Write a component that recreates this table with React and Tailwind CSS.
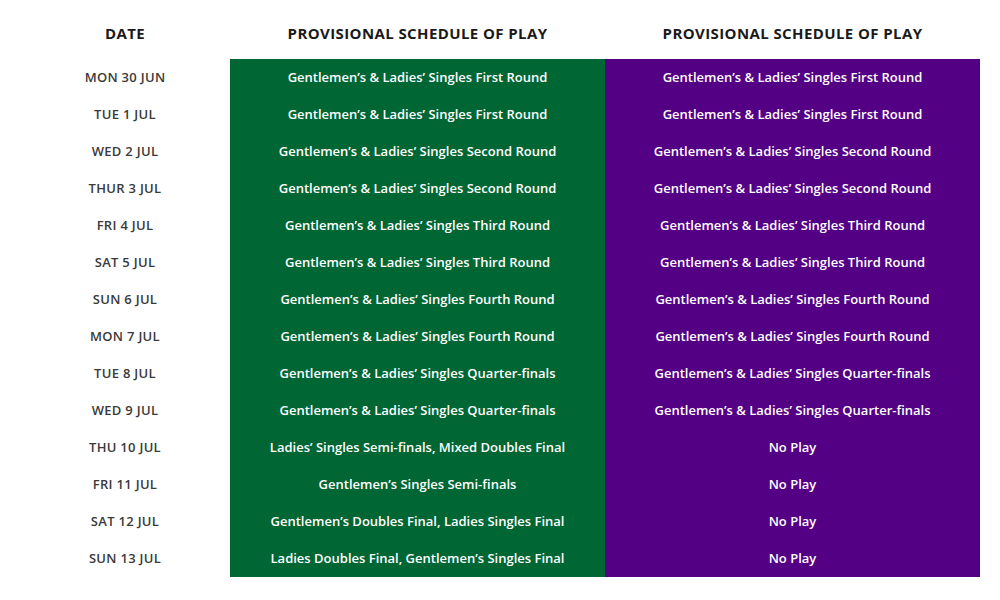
import React from "react";

const rows = [
  ["MON 30 JUN", "Gentlemen’s & Ladies’ Singles First Round", "Gentlemen’s & Ladies’ Singles First Round"],
  ["TUE 1 JUL", "Gentlemen’s & Ladies’ Singles First Round", "Gentlemen’s & Ladies’ Singles First Round"],
  ["WED 2 JUL", "Gentlemen’s & Ladies’ Singles Second Round", "Gentlemen’s & Ladies’ Singles Second Round"],
  ["THUR 3 JUL", "Gentlemen’s & Ladies’ Singles Second Round", "Gentlemen’s & Ladies’ Singles Second Round"],
  ["FRI 4 JUL", "Gentlemen’s & Ladies’ Singles Third Round", "Gentlemen’s & Ladies’ Singles Third Round"],
  ["SAT 5 JUL", "Gentlemen’s & Ladies’ Singles Third Round", "Gentlemen’s & Ladies’ Singles Third Round"],
  ["SUN 6 JUL", "Gentlemen’s & Ladies’ Singles Fourth Round", "Gentlemen’s & Ladies’ Singles Fourth Round"],
  ["MON 7 JUL", "Gentlemen’s & Ladies’ Singles Fourth Round", "Gentlemen’s & Ladies’ Singles Fourth Round"],
  ["TUE 8 JUL", "Gentlemen’s & Ladies’ Singles Quarter-finals", "Gentlemen’s & Ladies’ Singles Quarter-finals"],
  ["WED 9 JUL", "Gentlemen’s & Ladies’ Singles Quarter-finals", "Gentlemen’s & Ladies’ Singles Quarter-finals"],
  ["THU 10 JUL", "Ladies’ Singles Semi-finals, Mixed Doubles Final", "No Play"],
  ["FRI 11 JUL", "Gentlemen’s Singles Semi-finals", "No Play"],
  ["SAT 12 JUL", "Gentlemen’s Doubles Final, Ladies Singles Final", "No Play"],
  ["SUN 13 JUL", "Ladies Doubles Final, Gentlemen’s Singles Final", "No Play"],
];

export default function App() {
  return (
    <div
      className="w-[1000px] h-[600px] bg-white px-[20px]"
      style={{ fontFamily: "'Open Sans', 'Liberation Sans', sans-serif" }}
    >
      <div className="grid grid-cols-[210px_375px_375px]">
        <div className="h-[59px] flex items-center justify-center text-[15px] font-bold text-[#1a1a1a] tracking-[0.4px] pt-[7px]">
          DATE
        </div>
        <div className="h-[59px] flex items-center justify-center text-[15px] font-bold text-[#1a1a1a] tracking-[0.4px] pt-[7px]">
          PROVISIONAL SCHEDULE OF PLAY
        </div>
        <div className="h-[59px] flex items-center justify-center text-[15px] font-bold text-[#1a1a1a] tracking-[0.4px] pt-[7px]">
          PROVISIONAL SCHEDULE OF PLAY
        </div>
        {rows.map(([date, a, b]) => (
          <React.Fragment key={date}>
            <div className="h-[37px] flex items-center justify-center text-[13px] font-semibold text-[#3a3a3a] tracking-[0.3px]">
              {date}
            </div>
            <div className="h-[37px] flex items-center justify-center bg-[#006633] text-white text-[13px] font-semibold">
              {a}
            </div>
            <div className="h-[37px] flex items-center justify-center bg-[#540084] text-white text-[13px] font-semibold">
              {b}
            </div>
          </React.Fragment>
        ))}
      </div>
    </div>
  );
}
